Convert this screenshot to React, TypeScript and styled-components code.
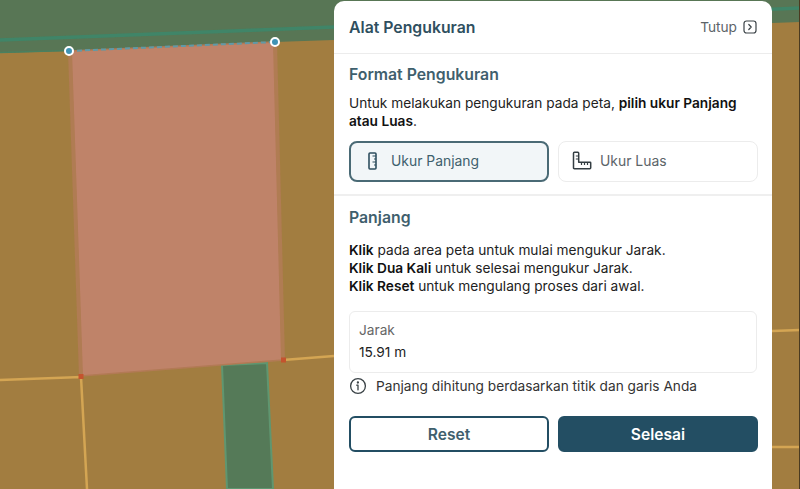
import React from "react";
import styled, { createGlobalStyle } from "styled-components";

const Global = createGlobalStyle`
  html, body { margin: 0; padding: 0; height: 100%; overflow: hidden; }
  #root { height: 100%; }
`;

const Stage = styled.div`
  position: relative;
  width: 800px;
  height: 489px;
  overflow: hidden;
  background: #a27d40;
  font-family: Inter, "Liberation Sans", sans-serif;
  display: flex;
  align-items: flex-start;
  padding-left: 334px;
  box-sizing: border-box;
`;

const MapCanvas = styled.svg`
  position: absolute;
  inset: 0;
  width: 800px;
  height: 489px;
`;

const Panel = styled.aside`
  position: relative;
  width: 438px;
  height: 488px;
  margin-top: 1px;
  background: #fff;
  border-radius: 10px 10px 0 0;
  display: flex;
  flex-direction: column;
  color: #111;
`;

const Header = styled.header`
  height: 53px;
  box-sizing: border-box;
  padding: 0 15px;
  border-bottom: 1px solid #ececec;
  display: flex;
  align-items: center;
  justify-content: space-between;
`;

const Title = styled.h1`
  margin: 0;
  font-size: 15.8px;
  font-weight: 600;
  color: #2f4f5f;
`;

const CloseButton = styled.div`
  display: flex;
  align-items: center;
  gap: 6px;
  font-size: 13.7px;
  color: #5c6468;
`;

const Section = styled.section<{ $top: number; $border?: boolean }>`
  padding: ${(p) => p.$top}px 15px 0;
  ${(p) => (p.$border ? "border-bottom: 2px solid #efefef;" : "")}
`;

const Heading = styled.h2`
  margin: 0;
  font-size: 15.8px;
  line-height: 20px;
  font-weight: 600;
  color: #3f5f6d;
`;

const Text = styled.p<{ $top: number }>`
  margin: ${(p) => p.$top}px 0 0;
  font-size: 13.7px;
  line-height: 18px;
  color: #222;
  strong { font-weight: 600; color: #111; }
`;

const Grid = styled.div`
  display: grid;
  grid-template-columns: 200px 200px;
  gap: 9px;
`;

const Tabs = styled(Grid)`
  margin-top: 11px;
  padding-bottom: 12px;
`;

const Tab = styled.div<{ $active?: boolean }>`
  height: 41px;
  box-sizing: border-box;
  border-radius: 8px;
  display: flex;
  align-items: center;
  gap: ${(p) => (p.$active ? "13px" : "8px")};
  padding: 0 0 1px ${(p) => (p.$active ? "15px" : "13px")};
  font-size: 13.9px;
  color: ${(p) => (p.$active ? "#3f5f6d" : "#5c6468")};
  background: ${(p) => (p.$active ? "#f2f6f8" : "#fff")};
  border: ${(p) => (p.$active ? "2px solid #4a6a75" : "1px solid #ececec")};
`;

const ResultBox = styled.div`
  margin-top: 16px;
  height: 62px;
  box-sizing: border-box;
  border: 1px solid #ececec;
  border-radius: 6px;
  padding: 9px 9px;
  display: flex;
  flex-direction: column;
  gap: 4px;
  font-size: 13.7px;
  line-height: 18px;
`;

const ResultLabel = styled.span`
  color: #666;
`;

const ResultValue = styled.span`
  color: #222;
`;

const Note = styled.div`
  margin-top: 4px;
  display: flex;
  align-items: center;
  gap: 9px;
  font-size: 13.7px;
  line-height: 18px;
  color: #333;
`;

const Actions = styled(Grid)`
  margin-top: 21px;
`;

const Action = styled.button<{ $primary?: boolean }>`
  height: 36px;
  box-sizing: border-box;
  border-radius: 6px;
  font-family: inherit;
  font-size: 15.6px;
  font-weight: 600;
  border: 2px solid #234e63;
  background: ${(p) => (p.$primary ? "#234e63" : "#fff")};
  color: ${(p) => (p.$primary ? "#fff" : "#3f5f6d")};
`;

const Map = () => (
  <MapCanvas viewBox="0 0 800 489">
    <defs>
      <filter id="soft" x="-5%" y="-5%" width="110%" height="110%">
        <feGaussianBlur stdDeviation="0.6" />
      </filter>
    </defs>
    <g filter="url(#soft)">
      <polygon points="0,0 800,0 800,22 772,23 334,40 275,42 69,51 0,53" fill="#587654" />
      <polyline points="0,40 334,27 800,8" fill="none" stroke="#3f8568" strokeWidth="3.5" />
      <polyline points="0,52.5 69,50.5" fill="none" stroke="#4a8060" strokeWidth="1.5" />
      <polygon points="222,365 267,363 273,489 227,489" fill="#557a58" stroke="#5f9670" strokeWidth="2" />
      <polyline points="0,380 81,377 87,489" fill="none" stroke="#d4a553" strokeWidth="2.5" />
      <polyline points="283,360 334,356" fill="none" stroke="#d4a553" strokeWidth="2.5" />
      <polyline points="772,331 800,330" fill="none" stroke="#d4a553" strokeWidth="2.5" />
      <polyline points="772,447 800,447" fill="none" stroke="#d4a553" strokeWidth="2.5" />
      <polygon points="70,51 275,42 283,360 81,376" fill="#bf8369" stroke="#b27a55" strokeWidth="1.5" />
      <line x1="70" y1="51" x2="81" y2="376" stroke="#b07b52" strokeWidth="4" />
      <line x1="275" y1="42" x2="283" y2="360" stroke="#b07b52" strokeWidth="4" />
      <line x1="69" y1="51" x2="275" y2="42" stroke="#5f9aa8" strokeWidth="2" strokeDasharray="5 3" />
      <rect x="78.5" y="374" width="5" height="5" fill="#c4532f" />
      <rect x="281" y="357.5" width="5" height="5" fill="#c4532f" />
    </g>
    <circle cx="69" cy="51" r="4" fill="#3f93b5" stroke="#fff" strokeWidth="2" />
    <circle cx="275" cy="42" r="4" fill="#3f93b5" stroke="#fff" strokeWidth="2" />
    <line x1="799.5" y1="0" x2="799.5" y2="489" stroke="#4a3a20" strokeWidth="1" />
  </MapCanvas>
);

const CloseIcon = () => (
  <svg width="14" height="14" viewBox="0 0 14 14" fill="none" stroke="#3a4246" strokeWidth="1.2">
    <rect x="1" y="1" width="12" height="12" rx="2.5" />
    <path d="M5.8 4.5 8.2 7 5.8 9.5" strokeLinecap="round" strokeLinejoin="round" />
  </svg>
);

const RulerIcon = () => (
  <svg width="12" height="18" viewBox="0 0 12 18" fill="none" stroke="#2f4f5f" strokeWidth="1.6">
    <rect x="3" y="1" width="7" height="16" rx="1" />
    <path d="M6.5 4H10M8 7h2M6.5 10H10M8 13h2" strokeWidth="1.2" />
  </svg>
);

const SquareRulerIcon = () => (
  <svg width="20" height="20" viewBox="0 0 20 20" fill="none" stroke="#333d42" strokeWidth="1.5">
    <path d="M1.5 2.2c0-.5.4-.9.9-.9h3.4c.5 0 .9.4.9.9v9h11.4c.3 0 .6.3.6.6v5c0 .5-.4.9-.9.9H2.4a.9.9 0 0 1-.9-.9z" strokeLinejoin="round" />
    <path d="M3.8 5h2.6M3.8 8h2.6M9.5 11.5v2.6M12.5 11.5v2.6M15.5 11.5v2.6" strokeWidth="1.2" />
  </svg>
);

const InfoIcon = () => (
  <svg width="18" height="18" viewBox="0 0 18 18" fill="none" stroke="#3a4246" strokeWidth="1.3">
    <circle cx="9" cy="9" r="7.4" />
    <path d="M7.7 8.2H9v4.6" strokeLinecap="round" strokeLinejoin="round" />
    <circle cx="8.9" cy="5.5" r="0.5" fill="#3a4246" />
  </svg>
);

export default function App() {
  return (
    <Stage>
      <Global />
      <Map />
      <Panel>
        <Header>
          <Title>Alat Pengukuran</Title>
          <CloseButton>
            Tutup
            <CloseIcon />
          </CloseButton>
        </Header>
        <Section $top={11} $border>
          <Heading>Format Pengukuran</Heading>
          <Text $top={9}>
            Untuk melakukan pengukuran pada peta, <strong>pilih ukur Panjang atau Luas</strong>.
          </Text>
          <Tabs>
            <Tab $active>
              <RulerIcon />
              Ukur Panjang
            </Tab>
            <Tab>
              <SquareRulerIcon />
              Ukur Luas
            </Tab>
          </Tabs>
        </Section>
        <Section $top={12}>
          <Heading>Panjang</Heading>
          <Text $top={13}>
            <strong>Klik</strong> pada area peta untuk mulai mengukur Jarak.
            <br />
            <strong>Klik Dua Kali</strong> untuk selesai mengukur Jarak.
            <br />
            <strong>Klik Reset</strong> untuk mengulang proses dari awal.
          </Text>
          <ResultBox>
            <ResultLabel>Jarak</ResultLabel>
            <ResultValue>15.91 m</ResultValue>
          </ResultBox>
          <Note>
            <InfoIcon />
            Panjang dihitung berdasarkan titik dan garis Anda
          </Note>
          <Actions>
            <Action>Reset</Action>
            <Action $primary>Selesai</Action>
          </Actions>
        </Section>
      </Panel>
    </Stage>
  );
}
